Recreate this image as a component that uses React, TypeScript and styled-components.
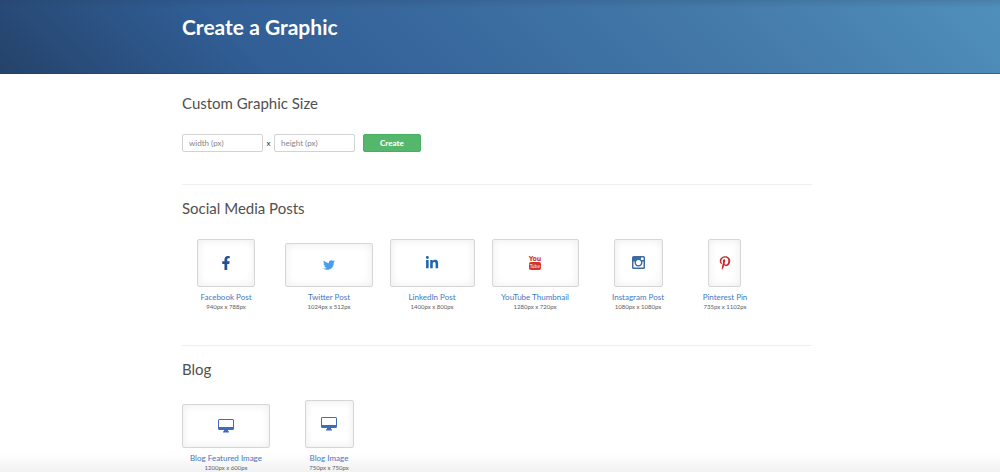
import React from "react";
import styled, { createGlobalStyle } from "styled-components";
import { FaFacebookF, FaTwitter, FaLinkedinIn, FaPinterestP } from "react-icons/fa";

const GlobalStyle = createGlobalStyle`
  * { box-sizing: border-box; }
  body {
    margin: 0;
    background: #fff;
    color: #505050;
    font-family: Lato, "Liberation Sans", sans-serif;
  }
`;

const Page = styled.div`
  min-height: 100vh;
`;

const Banner = styled.header`
  height: 74px;
  padding-right: 6px;
  border-bottom: 1px solid rgba(0, 70, 130, 0.5);
  background:
    linear-gradient(180deg, rgba(40, 60, 90, 0.18), rgba(40, 60, 90, 0) 8px),
    linear-gradient(45deg, #25426a 0%, #2a4f7e 11%, #305e95 25%, #37679c 42%, #447aaa 72%, #5090bc 100%);
  background-origin: border-box;
`;

const Container = styled.div`
  max-width: 630px;
  margin: 0 auto;
`;

const Title = styled.h1`
  margin: 0;
  padding-top: 14px;
  color: #fff;
  font-size: 21px;
  line-height: 26px;
  font-weight: 700;
`;

const Main = styled.main`
  padding-right: 6px;
`;

const Section = styled.section<{ $divided?: boolean }>`
  padding-top: ${(p) => (p.$divided ? 12 : 18)}px;
  border-top: ${(p) => (p.$divided ? "1px solid #efefef" : "none")};
`;

const Heading = styled.h2`
  margin: 0;
  font-size: 15px;
  line-height: 22px;
  font-weight: 400;
`;

const SizeForm = styled.form`
  display: flex;
  align-items: center;
  padding: 20px 0 32px;
  font-size: 8px;
`;

const SizeInput = styled.input`
  width: 81px;
  height: 18px;
  padding: 0 6px;
  border: 1px solid #d2d2d2;
  border-radius: 2px;
  outline: 0;
  color: #4a4a4a;
  font-family: inherit;
  font-size: 8px;
  &::placeholder { color: #858585; opacity: 1; }
`;

const Times = styled.span`
  width: 11px;
  text-align: center;
  line-height: 10px;
  color: #333;
`;

const CreateButton = styled.button`
  width: 58px;
  height: 18px;
  margin-left: 8px;
  padding: 0 0 1px;
  border: 1px solid #4aae60;
  border-radius: 2px;
  background: #55b76c;
  color: #fff;
  font-family: inherit;
  font-size: 8px;
  font-weight: 900;
`;

const Presets = styled.ul`
  display: flex;
  align-items: flex-end;
  gap: 15px;
  margin: 0;
  padding: 20px 0 0;
  list-style: none;
  ${Section}:not(:last-child) > & {
    padding-bottom: 33px;
  }
`;

const Preset = styled.li<{ $narrow?: boolean }>`
  width: ${(p) => (p.$narrow ? 56 : 88)}px;
  display: flex;
  flex-direction: column;
  align-items: center;
  white-space: nowrap;
`;

const PresetLink = styled.a`
  display: flex;
  flex-direction: column;
  align-items: center;
  color: #3f78c3;
  font-size: 8px;
  line-height: 10px;
  text-decoration: none;
`;

const Frame = styled.span<{ $w: number; $h: number; $color: string }>`
  display: flex;
  align-items: center;
  justify-content: center;
  width: ${(p) => p.$w}px;
  height: ${(p) => p.$h}px;
  margin-bottom: 5px;
  padding-bottom: 1px;
  border: 1px solid #d6d6d6;
  border-radius: 2px;
  box-shadow: inset 0 0 8px #ebebeb;
  color: ${(p) => p.$color};
`;

const Dimensions = styled.span`
  color: #606060;
  font-size: 6px;
  line-height: 10px;
`;

const BottomFade = styled.div`
  position: fixed;
  left: 0;
  right: 0;
  bottom: 0;
  height: 18px;
  pointer-events: none;
  background: linear-gradient(180deg, rgba(120, 120, 120, 0), rgba(120, 120, 120, 0.1));
`;

const YouTubeIcon = () => (
  <svg width="14" height="15" viewBox="0 0 14 15" aria-hidden="true">
    <g fontFamily="'Liberation Sans Narrow', 'DejaVu Sans Condensed', 'Liberation Sans', sans-serif" textAnchor="middle">
      <text x="7" y="6" fontSize="7" fontWeight="700" fill="currentColor">You</text>
      <rect x="1" y="7" width="12" height="8" rx="2" fill="currentColor" />
      <text x="7" y="13" fontSize="5" fill="#fff">Tube</text>
    </g>
  </svg>
);

const InstagramIcon = () => (
  <svg width="13" height="13" viewBox="0 0 24 24" aria-hidden="true">
    <path fillRule="evenodd" fill="currentColor" d="M3 0h18a3 3 0 0 1 3 3v18a3 3 0 0 1-3 3H3a3 3 0 0 1-3-3V3a3 3 0 0 1 3-3zM2.700 10v10.200c0 .7.500 1.200 1.200 1.200h16.200c.7 0 1.200-.5 1.200-1.200V10h-2.200a7.400 7.400 0 1 1-14.200 0zM17.500 2.700a1 1 0 0 0-1 1v2.800a1 1 0 0 0 1 1h2.900a1 1 0 0 0 1-1V3.700a1 1 0 0 0-1-1zM12 7.300a4.700 4.700 0 1 0 0 9.400 4.700 4.700 0 0 0 0-9.400z" />
  </svg>
);

const MonitorIcon = () => (
  <svg width="16" height="14" viewBox="0 0 32 28" aria-hidden="true">
    <path fillRule="evenodd" fill="currentColor" d="M3 0h26a3 3 0 0 1 3 3v16a3 3 0 0 1-3 3h-9v2.500h2V27H10v-2.500h2V22H3a3 3 0 0 1-3-3V3a3 3 0 0 1 3-3zM3 2a1 1 0 0 0-1 1v13h28V3a1 1 0 0 0-1-1z" />
  </svg>
);

type PresetData = {
  name: string;
  size: string;
  w: number;
  h: number;
  color: string;
  icon: React.ReactNode;
  narrow?: boolean;
};

const social: PresetData[] = [
  { name: "Facebook Post", size: "940px x 788px", w: 58, h: 48, color: "#24508f", icon: <FaFacebookF size={14} /> },
  { name: "Twitter Post", size: "1024px x 512px", w: 88, h: 44, color: "#4a9cf0", icon: <FaTwitter size={12} /> },
  { name: "LinkedIn Post", size: "1400px x 800px", w: 85, h: 48, color: "#1f65ad", icon: <FaLinkedinIn size={14} /> },
  { name: "YouTube Thumbnail", size: "1280px x 720px", w: 87, h: 48, color: "#d0342c", icon: <YouTubeIcon /> },
  { name: "Instagram Post", size: "1080px x 1080px", w: 49, h: 48, color: "#3c6b9f", icon: <InstagramIcon /> },
  { name: "Pinterest Pin", size: "735px x 1102px", w: 33, h: 48, color: "#c92a26", icon: <FaPinterestP size={14} />, narrow: true },
];

const blog: PresetData[] = [
  { name: "Blog Featured Image", size: "1200px x 600px", w: 88, h: 44, color: "#3f6bbb", icon: <MonitorIcon /> },
  { name: "Blog Image", size: "750px x 750px", w: 49, h: 48, color: "#3f6bbb", icon: <MonitorIcon /> },
];

const PresetList = ({ items }: { items: PresetData[] }) => (
  <Presets>
    {items.map((item) => (
      <Preset key={item.name} $narrow={item.narrow}>
        <PresetLink href="#">
          <Frame $w={item.w} $h={item.h} $color={item.color}>{item.icon}</Frame>
          {item.name}
        </PresetLink>
        <Dimensions>{item.size}</Dimensions>
      </Preset>
    ))}
  </Presets>
);

export default function App() {
  return (
    <Page>
      <GlobalStyle />
      <Banner>
        <Container>
          <Title>Create a Graphic</Title>
        </Container>
      </Banner>
      <Main>
        <Container>
          <Section>
            <Heading>Custom Graphic Size</Heading>
            <SizeForm onSubmit={(e) => e.preventDefault()}>
              <SizeInput aria-label="Width in pixels" placeholder="width (px)" />
              <Times>x</Times>
              <SizeInput aria-label="Height in pixels" placeholder="height (px)" />
              <CreateButton type="submit">Create</CreateButton>
            </SizeForm>
          </Section>
          <Section $divided>
            <Heading>Social Media Posts</Heading>
            <PresetList items={social} />
          </Section>
          <Section $divided>
            <Heading>Blog</Heading>
            <PresetList items={blog} />
          </Section>
        </Container>
      </Main>
      <BottomFade />
    </Page>
  );
}
